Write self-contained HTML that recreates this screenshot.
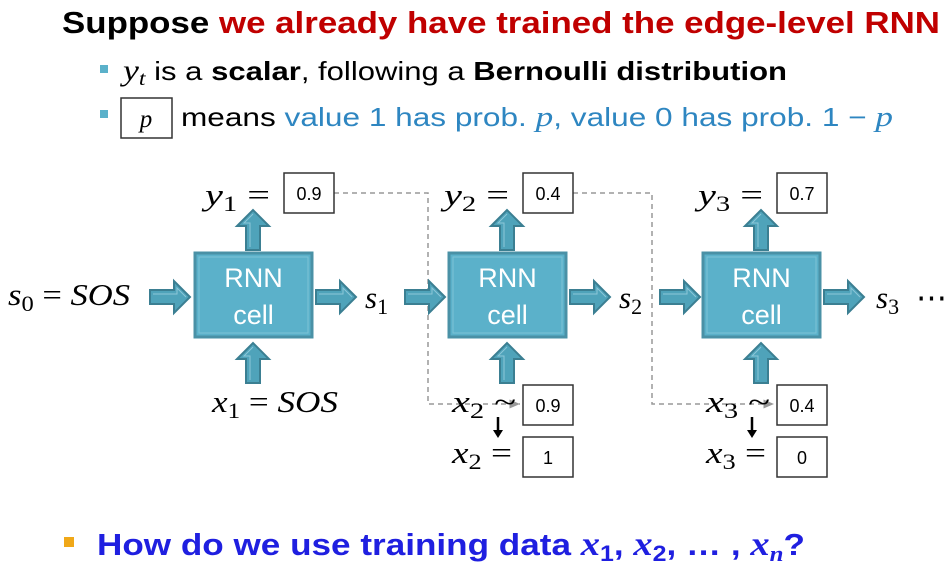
<!DOCTYPE html>
<html><head><meta charset="utf-8"><style>
html,body{margin:0;padding:0;background:#fff;}
svg{display:block;}
text{font-family:"Liberation Sans",sans-serif;}
.m{font-family:"Liberation Serif",serif;font-style:italic;}
.n{font-family:"Liberation Serif",serif;font-style:normal;}
</style></head><body>
<svg width="951" height="570" viewBox="0 0 951 570" xmlns="http://www.w3.org/2000/svg">
<defs>
<g id="ar"><path d="M0,-7 H24 V-16 L40,0 L24,16 V7 H0 Z" fill="#4fa3ba" stroke="#3b7f92" stroke-width="2"/><path d="M3,-3 H27 V-9 L36,0" fill="none" stroke="#8cc7d8" stroke-width="1"/></g>
<g id="cell"><rect x="0" y="0" width="117" height="84" fill="#5bb1ca" stroke="#4a91a6" stroke-width="3"/><rect x="4" y="4" width="109" height="76" fill="none" stroke="#7cc3d6" stroke-width="1"/><text x="58.5" y="34" text-anchor="middle" font-size="27" fill="#fff">RNN</text><text x="58.5" y="71" text-anchor="middle" font-size="27" fill="#fff">cell</text></g>
<marker id="ah" markerWidth="8" markerHeight="8" refX="7" refY="4" orient="auto"><path d="M0,1 L7,4 L0,7 Z" fill="#999"/></marker>
</defs>
<text x="62" y="33" font-size="31" font-weight="bold" textLength="878" lengthAdjust="spacingAndGlyphs"><tspan fill="#000">Suppose </tspan><tspan fill="#c00000">we already have trained the edge-level RNN</tspan></text>
<rect x="100" y="65" width="8" height="8" fill="#5bb1ca"/>
<text x="123" y="80" font-size="26" textLength="664" lengthAdjust="spacingAndGlyphs"><tspan class="m" font-size="30">y</tspan><tspan class="m" font-size="20" dy="5">t</tspan><tspan dy="-5"> is a </tspan><tspan font-weight="bold">scalar</tspan><tspan>, following a </tspan><tspan font-weight="bold">Bernoulli distribution</tspan></text>
<rect x="100" y="110" width="8" height="8" fill="#5bb1ca"/>
<rect x="121" y="98" width="51" height="40" fill="none" stroke="#333" stroke-width="1.5"/>
<text x="146" y="127" class="m" font-size="25" text-anchor="middle">p</text>
<text x="181" y="126" font-size="26" textLength="712" lengthAdjust="spacingAndGlyphs"><tspan fill="#000">means </tspan><tspan fill="#2e86c1">value 1 has prob. </tspan><tspan class="m" font-size="29" fill="#2e86c1">p</tspan><tspan fill="#2e86c1">, value 0 has prob. 1 − </tspan><tspan class="m" font-size="29" fill="#2e86c1">p</tspan></text>

<path d="M334,193 H428 V404 H520" fill="none" stroke="#999" stroke-width="1.5" stroke-dasharray="5,4" marker-end="url(#ah)"/>
<path d="M573,193 H652 V404 H774" fill="none" stroke="#999" stroke-width="1.5" stroke-dasharray="5,4" marker-end="url(#ah)"/>

<use href="#cell" x="195" y="253"/>
<use href="#cell" x="449" y="253"/>
<use href="#cell" x="703" y="253"/>

<use href="#ar" x="150" y="297"/>
<use href="#ar" x="316" y="297"/>
<use href="#ar" x="405" y="297"/>
<use href="#ar" x="570" y="297"/>
<use href="#ar" x="660" y="297"/>
<use href="#ar" x="824" y="297"/>
<use href="#ar" transform="translate(253,250) rotate(-90)"/>
<use href="#ar" transform="translate(507,250) rotate(-90)"/>
<use href="#ar" transform="translate(761,250) rotate(-90)"/>
<use href="#ar" transform="translate(253,383) rotate(-90)"/>
<use href="#ar" transform="translate(507,383) rotate(-90)"/>
<use href="#ar" transform="translate(761,383) rotate(-90)"/>

<g font-size="31">
<text x="8" y="305" class="m" textLength="122" lengthAdjust="spacingAndGlyphs">s<tspan font-size="22" dy="6" class="n">0</tspan><tspan dy="-6" class="n"> = </tspan><tspan>SOS</tspan></text>
<text x="365" y="308" class="m">s<tspan font-size="22" dy="6" class="n">1</tspan></text>
<text x="619" y="308" class="m">s<tspan font-size="22" dy="6" class="n">2</tspan></text>
<text x="876" y="308" class="m">s<tspan font-size="22" dy="6" class="n">3</tspan></text>
<text x="916" y="308" class="n">⋯</text>
<text x="205" y="205" class="m" textLength="65" lengthAdjust="spacingAndGlyphs">y<tspan font-size="22" dy="6" class="n">1</tspan><tspan dy="-6" class="n"> =</tspan></text>
<text x="444" y="205" class="m" textLength="65" lengthAdjust="spacingAndGlyphs">y<tspan font-size="22" dy="6" class="n">2</tspan><tspan dy="-6" class="n"> =</tspan></text>
<text x="698" y="205" class="m" textLength="65" lengthAdjust="spacingAndGlyphs">y<tspan font-size="22" dy="6" class="n">3</tspan><tspan dy="-6" class="n"> =</tspan></text>
<text x="212" y="412" class="m" textLength="126" lengthAdjust="spacingAndGlyphs">x<tspan font-size="22" dy="6" class="n">1</tspan><tspan dy="-6" class="n"> = </tspan><tspan>SOS</tspan></text>
<text x="452" y="412" class="m" textLength="64" lengthAdjust="spacingAndGlyphs">x<tspan font-size="22" dy="6" class="n">2</tspan><tspan dy="-6" class="n"> ~</tspan></text>
<text x="706" y="412" class="m" textLength="64" lengthAdjust="spacingAndGlyphs">x<tspan font-size="22" dy="6" class="n">3</tspan><tspan dy="-6" class="n"> ~</tspan></text>
<text x="452" y="463" class="m" textLength="60" lengthAdjust="spacingAndGlyphs">x<tspan font-size="22" dy="6" class="n">2</tspan><tspan dy="-6" class="n"> =</tspan></text>
<text x="706" y="463" class="m" textLength="60" lengthAdjust="spacingAndGlyphs">x<tspan font-size="22" dy="6" class="n">3</tspan><tspan dy="-6" class="n"> =</tspan></text>
</g>
<g fill="#fff" stroke="#333" stroke-width="1.5">
<rect x="284" y="173" width="50" height="40"/><rect x="523" y="173" width="50" height="40"/><rect x="777" y="173" width="50" height="40"/>
<rect x="523" y="385" width="50" height="40"/><rect x="777" y="385" width="50" height="40"/>
<rect x="523" y="437" width="50" height="40"/><rect x="777" y="437" width="50" height="40"/>
</g>
<g font-size="18" text-anchor="middle">
<text x="309" y="200">0.9</text><text x="548" y="200">0.4</text><text x="802" y="200">0.7</text>
<text x="548" y="412">0.9</text><text x="802" y="412">0.4</text>
<text x="548" y="464">1</text><text x="802" y="464">0</text>
</g>
<path d="M498,417 V432" stroke="#000" stroke-width="2.5"/><path d="M493,430 L498,438 L503,430 Z" fill="#000"/>
<path d="M752,417 V432" stroke="#000" stroke-width="2.5"/><path d="M747,430 L752,438 L757,430 Z" fill="#000"/>

<rect x="64" y="537" width="10" height="10" fill="#f0a818"/>
<text x="97" y="555" font-size="31" font-weight="bold" fill="#1f1fe0" textLength="708" lengthAdjust="spacingAndGlyphs">How do we use training data <tspan class="m" font-size="34">x</tspan><tspan font-size="22" dy="6">1</tspan><tspan dy="-6">, </tspan><tspan class="m" font-size="34">x</tspan><tspan font-size="22" dy="6">2</tspan><tspan dy="-6">, … , </tspan><tspan class="m" font-size="34">x</tspan><tspan class="m" font-size="22" dy="6">n</tspan><tspan dy="-6">?</tspan></text>
</svg>
</body></html>
